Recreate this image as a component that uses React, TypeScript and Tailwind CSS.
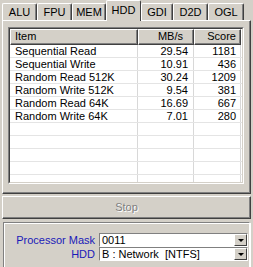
import React from 'react';

const tabs = [
  { name: 'ALU', w: 'w-[35px]' },
  { name: 'FPU', w: 'w-[35px]' },
  { name: 'MEM', w: 'w-[34px]' },
  { name: 'HDD', w: 'w-[35px]' },
  { name: 'GDI', w: 'w-[32px]' },
  { name: 'D2D', w: 'w-[35px]' },
  { name: 'OGL', w: 'w-[36px]' },
];

const rows = [
  { item: 'Sequential Read', mbs: '29.54', score: '1181' },
  { item: 'Sequential Write', mbs: '10.91', score: '436' },
  { item: 'Random Read 512K', mbs: '30.24', score: '1209' },
  { item: 'Random Write 512K', mbs: '9.54', score: '381' },
  { item: 'Random Read 64K', mbs: '16.69', score: '667' },
  { item: 'Random Write 64K', mbs: '7.01', score: '280' },
];

function Row({ item, mbs, score }: { item: string; mbs: string; score: string }) {
  return (
    <div className="flex h-[13px] border-b border-[#e4e4e4] leading-[12px]">
      <div className="w-[128px] border-r border-[#d8d8d8] pl-[5px]">{item}</div>
      <div className="w-[56px] border-r border-[#d8d8d8] pr-[5px] text-right">{mbs}</div>
      <div className="w-[47px] border-r border-[#d8d8d8] pr-[4px] text-right">{score}</div>
    </div>
  );
}

function Select({ value }: { value: string }) {
  return (
    <div className="w-[149px] h-[14px] border border-t-[#808080] border-l-[#808080] border-r-white border-b-white">
      <div className="flex h-full bg-white">
        <div className="flex-1 pl-[2px] leading-[12px] whitespace-pre">{value}</div>
        <div className="w-[13px] h-full bg-[#d4d0c8] border border-t-white border-l-white border-r-[#404040] border-b-[#404040] flex items-center justify-center">
          <div className="w-0 h-0 border-l-[3px] border-r-[3px] border-t-[3px] border-l-transparent border-r-transparent border-t-black" />
        </div>
      </div>
    </div>
  );
}

export default function App() {
  return (
    <div
      className="w-[253px] h-[267px] overflow-hidden bg-[#d4d0c8] text-[11px] text-black"
      style={{ fontFamily: '"Liberation Sans", Arial, sans-serif' }}
    >
      {/* tabs */}
      <div className="flex items-end h-[20px] pl-[2px]">
        {tabs.map((t) =>
          t.name === 'HDD' ? (
            <div
              key={t.name}
              className={`${t.w} h-[21px] -mb-px relative z-10 bg-[#d4d0c8] border-t border-l border-white border-r border-r-[#404040] rounded-t-[2px] flex items-center justify-center pb-[2px]`}
            >
              {t.name}
            </div>
          ) : (
            <div
              key={t.name}
              className={`${t.w} h-[17px] border-t border-l border-white border-r border-r-[#404040] shadow-[inset_-1px_0_0_#808080] rounded-t-[2px] flex items-center justify-center`}
            >
              {t.name}
            </div>
          )
        )}
      </div>

      {/* tab page */}
      <div className="ml-[2px] w-[249px] h-[174px] border border-t-white border-l-white border-r-[#404040] border-b-[#404040] shadow-[inset_-1px_-1px_0_#808080] pt-[6px] pl-[5px]">
        <div className="w-[236px] h-[157px] border border-t-[#808080] border-l-[#808080] border-r-white border-b-white">
          <div className="h-full border border-t-[#404040] border-l-[#404040] border-r-[#d4d0c8] border-b-[#d4d0c8] bg-white overflow-hidden">
            <div className="flex h-[16px] leading-[13px]">
              <div className="w-[128px] border border-t-white border-l-white border-r-[#404040] border-b-[#404040] shadow-[inset_-1px_-1px_0_#808080] bg-[#d4d0c8] pl-[4px]">
                Item
              </div>
              <div className="w-[56px] border border-t-white border-l-white border-r-[#404040] border-b-[#404040] shadow-[inset_-1px_-1px_0_#808080] bg-[#d4d0c8] pr-[10px] text-right">
                MB/s
              </div>
              <div className="w-[47px] border border-t-white border-l-white border-r-[#404040] border-b-[#404040] shadow-[inset_-1px_-1px_0_#808080] bg-[#d4d0c8] pr-[4px] text-right">
                Score
              </div>
            </div>
            {rows.map((r) => (
              <Row key={r.item} {...r} />
            ))}
            {[0, 1, 2, 3, 4].map((i) => (
              <Row key={i} item="" mbs="" score="" />
            ))}
          </div>
        </div>
      </div>

      {/* stop button */}
      <div className="mt-[2px] ml-[2px] w-[249px] h-[23px] border border-t-white border-l-white border-r-[#404040] border-b-[#404040] shadow-[inset_-1px_-1px_0_#808080] flex items-center justify-center">
        <span className="text-[#808080] [text-shadow:1px_1px_0_#ffffff]">Stop</span>
      </div>

      {/* settings group */}
      <div className="mt-[3px] ml-[3px] w-[247px] h-[60px] border border-t-[#808080] border-l-[#808080] border-r-white border-b-white shadow-[inset_1px_1px_0_#ffffff,1px_1px_0_#ffffff] pt-[10px]">
        <div className="flex flex-col">
          <div className="flex items-center h-[14px]">
            <div className="w-[95px] text-right pr-[4px] text-[#1a1ab8]">Processor Mask</div>
            <Select value="0011" />
          </div>
          <div className="flex items-center h-[14px]">
            <div className="w-[95px] text-right pr-[4px] text-[#1a1ab8]">HDD</div>
            <Select value="B : Network  [NTFS]" />
          </div>
        </div>
      </div>
    </div>
  );
}
